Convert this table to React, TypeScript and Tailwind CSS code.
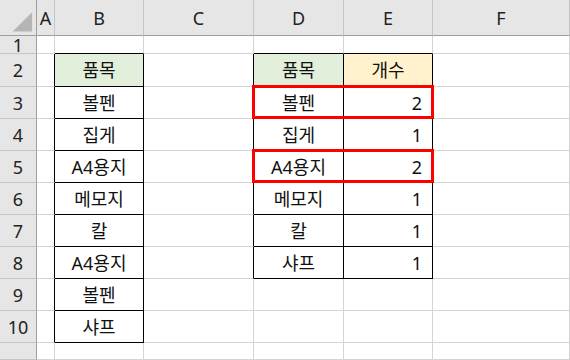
import React from 'react'

const columns = ['A', 'B', 'C', 'D', 'E', 'F']

// cell values keyed by row number, one entry per column A..F
const sheet: Record<number, string[]> = {
    1: ['', '', '', '', '', ''],
    2: ['', '품목', '', '품목', '개수', ''],
    3: ['', '볼펜', '', '볼펜', '2', ''],
    4: ['', '집게', '', '집게', '1', ''],
    5: ['', 'A4용지', '', 'A4용지', '2', ''],
    6: ['', '메모지', '', '메모지', '1', ''],
    7: ['', '칼', '', '칼', '1', ''],
    8: ['', 'A4용지', '', '샤프', '1', ''],
    9: ['', '볼펜', '', '', '', ''],
    10: ['', '샤프', '', '', '', ''],
    11: ['', '', '', '', '', ''],
}

// c: 1 = column A ... 6 = column F
const inTable = (r: number, c: number) =>
    (c === 2 && r >= 2 && r <= 10) || ((c === 4 || c === 5) && r >= 2 && r <= 8)

const Cell = ({ r, c, value }: { r: number; c: number; value: string }) => {
    const rightBlack = inTable(r, c) || inTable(r, c + 1)
    const bottomBlack = inTable(r, c) || inTable(r + 1, c)
    const isNumber = c === 5 && r >= 3

    let fill = 'bg-white'
    if (r === 2 && (c === 2 || c === 4)) fill = 'bg-[#e2efda]'
    if (r === 2 && c === 5) fill = 'bg-[#fff2cc]'

    return (
        <div
            className={[
                'flex items-center border-r border-b pt-[1px] text-[18px] text-[#111]',
                rightBlack ? 'border-r-black' : 'border-r-[#d4d4d4]',
                bottomBlack ? 'border-b-black' : 'border-b-[#d4d4d4]',
                isNumber ? 'justify-end pr-[10px]' : 'justify-center',
                fill,
            ].join(' ')}
        >
            {value}
        </div>
    )
}

export default function App() {
    const rows = Object.keys(sheet).map(Number)

    return (
        <div
            className="relative h-[360px] w-[570px] overflow-hidden bg-white"
            style={{ fontFamily: '"Noto Sans", "Noto Sans CJK KR", sans-serif' }}
        >
            <div className="grid h-full grid-cols-[37px_18px_89px_110px_90px_89px_1fr] grid-rows-[36px_18px_33px_repeat(8,32px)_1fr]">
                {/* select-all corner */}
                <div className="flex items-center justify-center border-r border-b border-r-[#9e9e9e] border-b-[#9e9e9e] bg-[#e6e6e6]">
                    <svg width="37" height="36" viewBox="0 0 37 36">
                        <polygon points="33,12 33,32 13,32" fill="#b5b5b5" />
                    </svg>
                </div>

                {columns.map((col) => (
                    <div
                        key={col}
                        className="flex items-center justify-center border-r border-b border-r-[#c6c6c6] border-b-[#9e9e9e] bg-[#e6e6e6] pt-[1px] text-[18px] text-[#222]"
                    >
                        {col}
                    </div>
                ))}

                {rows.map((r) => (
                    <React.Fragment key={r}>
                        <div className="flex items-center justify-center border-r border-b border-r-[#9e9e9e] border-b-[#c6c6c6] bg-[#e6e6e6] pt-[1px] text-[18px] text-[#222]">
                            {r <= 10 ? r : ''}
                        </div>
                        {sheet[r].map((value, i) => (
                            <Cell key={i} r={r} c={i + 1} value={value} />
                        ))}
                    </React.Fragment>
                ))}
            </div>

            {/* highlighted rows in the count table */}
            <div className="absolute top-[85px] left-[252px] h-[34px] w-[182px] border-[3px] border-[#ff0000]" />
            <div className="absolute top-[149px] left-[252px] h-[34px] w-[182px] border-[3px] border-[#ff0000]" />
        </div>
    )
}
